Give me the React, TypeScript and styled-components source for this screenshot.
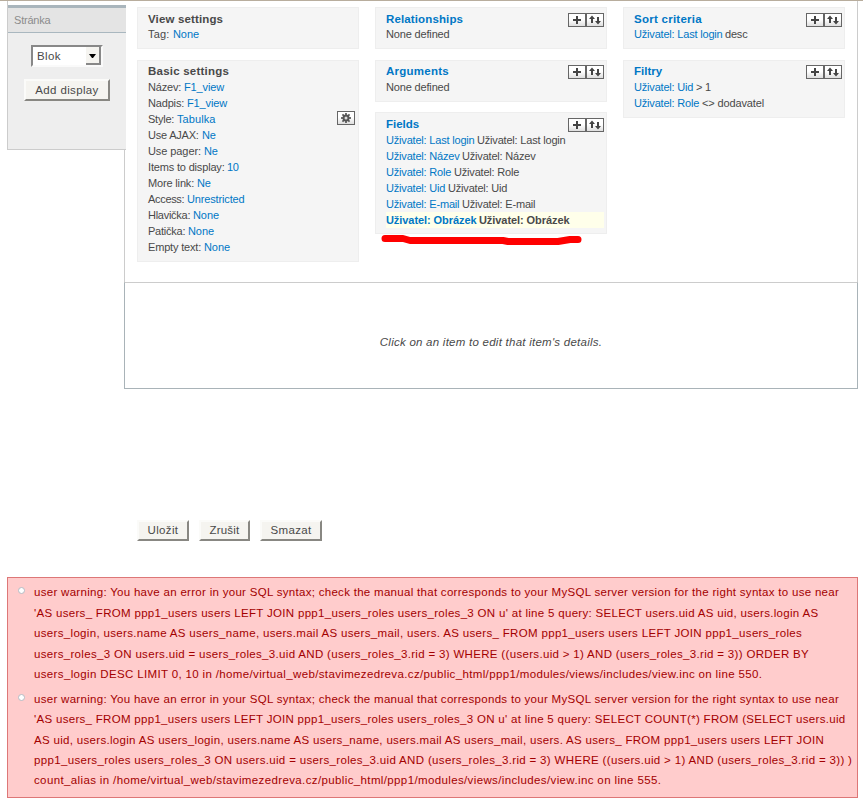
import React from 'react';
import styled, { createGlobalStyle, css } from 'styled-components';

const GlobalStyle = createGlobalStyle`
  body {
    margin: 0;
    background: #fff;
    color: #494949;
    font: 11px/16px "Liberation Sans", Arial, sans-serif;
  }
  *, *::before { box-sizing: border-box; }
`;

const Page = styled.div`
  position: relative;
  width: 863px;
  height: 804px;
  overflow: hidden;
  border-top: 1px solid #b8ad9d;
`;

const Editor = styled.div`
  display: flex;
  align-items: flex-start;
  padding-left: 7px;
  height: 519px;
`;

const Sidebar = styled.aside`
  position: relative;
  z-index: 1;
  width: 119px;
  height: 149px;
  padding-top: 4px;
  background: linear-gradient(#fff 4px, #eee 4px);
  border-left: 1px solid #ccc;
  border-bottom: 1px solid #ccc;
`;

const Tab = styled.div`
  height: 28px;
  padding: 4px 6px 0;
  border-top: 3px solid #a9b5bc;
  border-bottom: 1px solid #a9b7bf;
  background: #e4e4e4;
  color: #8c8c8c;
  line-height: 16px;
  letter-spacing: -0.2px;
`;

const Select = styled.div`
  display: flex;
  justify-content: space-between;
  width: 72px;
  height: 22px;
  margin: 12px 0 0 23px;
  padding-left: 4px;
  border: 2px solid #888;
  border-right-color: #fafafa;
  border-bottom-color: #fafafa;
  background: #fff;
  font-size: 11.5px;
  line-height: 18px;
  letter-spacing: 0.4px;
`;

const Arrow = styled.span`
  display: flex;
  align-items: center;
  justify-content: center;
  width: 15px;
  height: 18px;
  padding-top: 1px;
  border-right: 2px solid #888;
  border-bottom: 2px solid #888;
  background: #f5f4f0;
  svg { display: block; }
`;

const Button = styled.button<{ $w: number; $h?: number; $ls?: number }>`
  width: ${p => p.$w}px;
  height: ${p => p.$h ?? 21}px;
  padding: 0 0 ${p => (p.$h ? 0 : 1)}px;
  border: 2px solid #fbfbf9;
  border-right-color: #888782;
  border-bottom-color: #888782;
  background: #f5f4f0;
  color: #494949;
  font: inherit;
  font-size: 11.5px;
  line-height: 16px;
  letter-spacing: ${p => p.$ls ?? 0.35}px;
`;

const AddDisplay = styled.div`
  padding: 12px 0 0 16px;
  display: flex;
`;

const Main = styled.main`
  width: 734px;
  height: 388px;
  margin-left: -2px;
  display: flex;
  flex-direction: column;
`;

const Panels = styled.div`
  display: flex;
  align-items: flex-start;
  gap: 16px;
  height: 281px;
  padding: 6px 0 0 12px;
  border: solid #ccc;
  border-width: 0 1px;
`;

const Column = styled.div<{ $w: number }>`
  width: ${p => p.$w}px;
`;

const Panel = styled.section<{ $h: number; $gap?: number; $top?: number }>`
  position: relative;
  height: ${p => p.$h}px;
  margin-top: ${p => p.$gap ?? 0}px;
  padding: ${p => p.$top ?? 3}px 2px 0 10px;
  border: 1px solid #eee;
  background: #f5f5f5;
`;

const Title = styled.h3<{ $ls: number; $link?: boolean; $tight?: boolean }>`
  height: ${p => (p.$tight ? 15 : 16)}px;
  margin: 0;
  font-size: 11.5px;
  line-height: 16px;
  white-space: nowrap;
  letter-spacing: ${p => p.$ls}px;
  color: ${p => (p.$link ? '#0077c5' : '#494949')};
`;

const Row = styled.div<{ $active?: boolean }>`
  height: 16px;
  display: flex;
  white-space: pre;
  ${p => p.$active && css`
    background: #ffffea;
    font-weight: bold;
  `}
`;

const Text = styled.span<{ $w?: number; $ls?: number }>`
  ${p => p.$w && css`width: ${p.$w}px;`}
  letter-spacing: ${p => p.$ls ?? -0.19}px;
`;

const Link = styled(Text)`
  color: #0077c5;
`;

const Tools = styled.div<{ $top?: number }>`
  position: absolute;
  top: ${p => p.$top ?? 5}px;
  right: 2px;
  display: flex;
`;

const Tool = styled.span`
  display: block;
  width: 18px;
  height: 14px;
  border: 1px solid #666;
  background: linear-gradient(#fff 45%, #dedede);
  svg { display: block; }
`;

const GearSlot = styled.div`
  position: absolute;
  top: 50px;
  right: 3px;
`;

const Details = styled.div`
  height: 107px;
  display: flex;
  align-items: center;
  justify-content: center;
  padding-top: 12px;
  border: 1px solid #a9b3b8;
  border-top-color: #ccc;
  font-size: 11.5px;
  font-style: italic;
  letter-spacing: 0.25px;
`;

const Actions = styled.div`
  display: flex;
  align-items: flex-start;
  gap: 10px;
  padding-left: 137px;
  height: 57px;
`;

const Messages = styled.ul`
  width: 851px;
  height: 221px;
  margin: 0 0 0 7px;
  padding: 4px 0 0 26px;
  border: 1px solid #d77;
  background: #fcc;
  color: #a30000;
  font-size: 11.5px;
  list-style: none;
`;

const Message = styled.li<{ $h: number; $pitch: number }>`
  position: relative;
  height: ${p => p.$h}px;
  line-height: ${p => p.$pitch}px;
  &::before {
    content: '';
    position: absolute;
    left: -16px;
    top: 5px;
    width: 7px;
    height: 7px;
    border: 1px solid #b5bcc4;
    border-radius: 50%;
    background: #fff;
  }
`;

const Line = styled.div<{ $ls: number }>`
  white-space: nowrap;
  letter-spacing: ${p => p.$ls}px;
`;

const Stroke = styled.svg`
  position: absolute;
  left: 380px;
  top: 232px;
  z-index: 2;
`;

const PlusTool = () => (
  <Tool>
    <svg width="16" height="12" viewBox="0 0 16 12">
      <path d="M4 6h8M8 2v8" stroke="#444" strokeWidth="2" shapeRendering="crispEdges" />
    </svg>
  </Tool>
);

const SortTool = () => (
  <Tool>
    <svg width="16" height="12" viewBox="0 0 16 12" fill="#444">
      <path d="M5 1.500L8 5H6v4H4V5H2zM11 10.500L14 7H12V3H10V7H8z" />
    </svg>
  </Tool>
);

const EditTools = ({ top }: { top?: number }) => (
  <Tools $top={top}>
    <PlusTool />
    <SortTool />
  </Tools>
);

type Setting = { label: string; w: number; ls: number; value: string; vls?: number };

const settings: Setting[] = [
  { label: 'Název: ', w: 36, ls: -0.18, value: 'F1_view', vls: -0.13 },
  { label: 'Nadpis: ', w: 39, ls: -0.17, value: 'F1_view', vls: -0.13 },
  { label: 'Style: ', w: 29, ls: -0.22, value: 'Tabulka', vls: 0.08 },
  { label: 'Use AJAX: ', w: 54, ls: -0.22, value: 'Ne' },
  { label: 'Use pager: ', w: 56, ls: -0.08, value: 'Ne' },
  { label: 'Items to display: ', w: 79, ls: -0.17, value: '10' },
  { label: 'More link: ', w: 49, ls: -0.16, value: 'Ne' },
  { label: 'Access: ', w: 39, ls: -0.32, value: 'Unrestricted', vls: -0.15 },
  { label: 'Hlavička: ', w: 45, ls: -0.27, value: 'None', vls: -0.07 },
  { label: 'Patička: ', w: 40, ls: -0.24, value: 'None', vls: -0.07 },
  { label: 'Empty text: ', w: 56, ls: -0.17, value: 'None', vls: -0.07 },
];

const fields = [
  { name: 'Last login', w: 91 },
  { name: 'Název', w: 76 },
  { name: 'Role', w: 68 },
  { name: 'Uid', w: 62 },
  { name: 'E-mail', w: 76 },
];

const warnings = [
  {
    h: 107,
    pitch: 20.5,
    lines: [
      ['user warning: You have an error in your SQL syntax; check the manual that corresponds to your MySQL server version for the right syntax to use near', 0.295],
      ["'AS users_ FROM ppp1_users users LEFT JOIN ppp1_users_roles users_roles_3 ON u' at line 5 query: SELECT users.uid AS uid, users.login AS", 0.31],
      ['users_login, users.name AS users_name, users.mail AS users_mail, users. AS users_ FROM ppp1_users users LEFT JOIN ppp1_users_roles', 0.33],
      ['users_roles_3 ON users.uid = users_roles_3.uid AND (users_roles_3.rid = 3) WHERE ((users.uid > 1) AND (users_roles_3.rid = 3)) ORDER BY', 0.325],
      ['users_login DESC LIMIT 0, 10 in /home/virtual_web/stavimezedreva.cz/public_html/ppp1/modules/views/includes/view.inc on line 550.', 0.355],
    ] as [string, number][],
  },
  {
    h: 102,
    pitch: 20.3,
    lines: [
      ['user warning: You have an error in your SQL syntax; check the manual that corresponds to your MySQL server version for the right syntax to use near', 0.295],
      ["'AS users_ FROM ppp1_users users LEFT JOIN ppp1_users_roles users_roles_3 ON u' at line 5 query: SELECT COUNT(*) FROM (SELECT users.uid", 0.302],
      ['AS uid, users.login AS users_login, users.name AS users_name, users.mail AS users_mail, users. AS users_ FROM ppp1_users users LEFT JOIN', 0.312],
      ['ppp1_users_roles users_roles_3 ON users.uid = users_roles_3.uid AND (users_roles_3.rid = 3) WHERE ((users.uid > 1) AND (users_roles_3.rid = 3)) )', 0.336],
      ['count_alias in /home/virtual_web/stavimezedreva.cz/public_html/ppp1/modules/views/includes/view.inc on line 555.', 0.373],
    ] as [string, number][],
  },
];

const gearTeeth = [0, 45, 90, 135];

export default function App() {
  return (
    <Page>
      <GlobalStyle />
      <Editor>
        <Sidebar>
          <Tab>Stránka</Tab>
          <Select>
            Blok
            <Arrow>
              <svg width="7" height="4" viewBox="0 0 7 4"><path d="M0 0h7L4 4H3z" /></svg>
            </Arrow>
          </Select>
          <AddDisplay><Button $w={86} $h={22}>Add display</Button></AddDisplay>
        </Sidebar>
        <Main>
          <Panels>
            <Column $w={222}>
              <Panel $h={42}>
                <Title $ls={0.14} $tight>View settings</Title>
                <Row><Text $w={25} $ls={0.2}>Tag: </Text><Link $ls={-0.07}>None</Link></Row>
              </Panel>
              <Panel $h={202} $gap={11} $top={2}>
                <Title $ls={0.22}>Basic settings</Title>
                {settings.map(s => (
                  <Row key={s.label}>
                    <Text $w={s.w} $ls={s.ls}>{s.label}</Text>
                    <Link $ls={s.vls ?? -0.28}>{s.value}</Link>
                  </Row>
                ))}
                <GearSlot>
                  <Tool>
                    <svg width="16" height="12" viewBox="0 0 16 12">
                      <g stroke="#555" strokeWidth="1.7">
                        {gearTeeth.map(a => (
                          <path key={a} d="M8 1v10" transform={`rotate(${a} 8 6)`} />
                        ))}
                      </g>
                      <circle cx="8" cy="6" r="2.500" fill="#ddd" stroke="#555" strokeWidth="2" />
                    </svg>
                  </Tool>
                </GearSlot>
              </Panel>
            </Column>
            <Column $w={232}>
              <Panel $h={42}>
                <Title $ls={0.13} $link $tight>Relationships</Title>
                <Row><Text $ls={-0.16}>None defined</Text></Row>
                <EditTools />
              </Panel>
              <Panel $h={42} $gap={11} $top={2}>
                <Title $ls={0.25} $link>Arguments</Title>
                <Row><Text $ls={-0.16}>None defined</Text></Row>
                <EditTools top={4} />
              </Panel>
              <Panel $h={122} $gap={10}>
                <Title $ls={-0.03} $link>Fields</Title>
                {fields.map(f => (
                  <Row key={f.name}>
                    <Link $w={f.w}>Uživatel: {f.name}</Link>
                    <Text>Uživatel: {f.name}</Text>
                  </Row>
                ))}
                <Row $active>
                  <Link $w={93} $ls={-0.07}>Uživatel: Obrázek</Link>
                  <Text $ls={-0.07}>Uživatel: Obrázek</Text>
                </Row>
                <EditTools />
              </Panel>
            </Column>
            <Column $w={222}>
              <Panel $h={42}>
                <Title $ls={0.26} $link $tight>Sort criteria</Title>
                <Row><Link $w={91}>Uživatel: Last login</Link><Text>desc</Text></Row>
                <EditTools />
              </Panel>
              <Panel $h={58} $gap={11} $top={2}>
                <Title $ls={0} $link>Filtry</Title>
                <Row><Link $w={62}>Uživatel: Uid</Link><Text>&gt; 1</Text></Row>
                <Row><Link $w={68}>Uživatel: Role</Link><Text $ls={-0.13}>&lt;&gt; dodavatel</Text></Row>
                <EditTools top={4} />
              </Panel>
            </Column>
          </Panels>
          <Details>Click on an item to edit that item's details.</Details>
        </Main>
      </Editor>
      <Actions>
        <Button $w={52}>Uložit</Button>
        <Button $w={51} $ls={0.2}>Zrušit</Button>
        <Button $w={62}>Smazat</Button>
      </Actions>
      <Messages>
        {warnings.map(m => (
          <Message key={m.pitch} $h={m.h} $pitch={m.pitch}>
            {m.lines.map(([text, ls]) => <Line key={text} $ls={ls}>{text}</Line>)}
          </Message>
        ))}
      </Messages>
      <Stroke width="206" height="14" viewBox="0 0 206 14" fill="none" stroke="#f00" strokeWidth="7" strokeLinejoin="round" strokeLinecap="round">
        <path d="M5 5.500H23L30 7.500H123L128 8.500H178L190 6.500H198" />
      </Stroke>
    </Page>
  );
}
